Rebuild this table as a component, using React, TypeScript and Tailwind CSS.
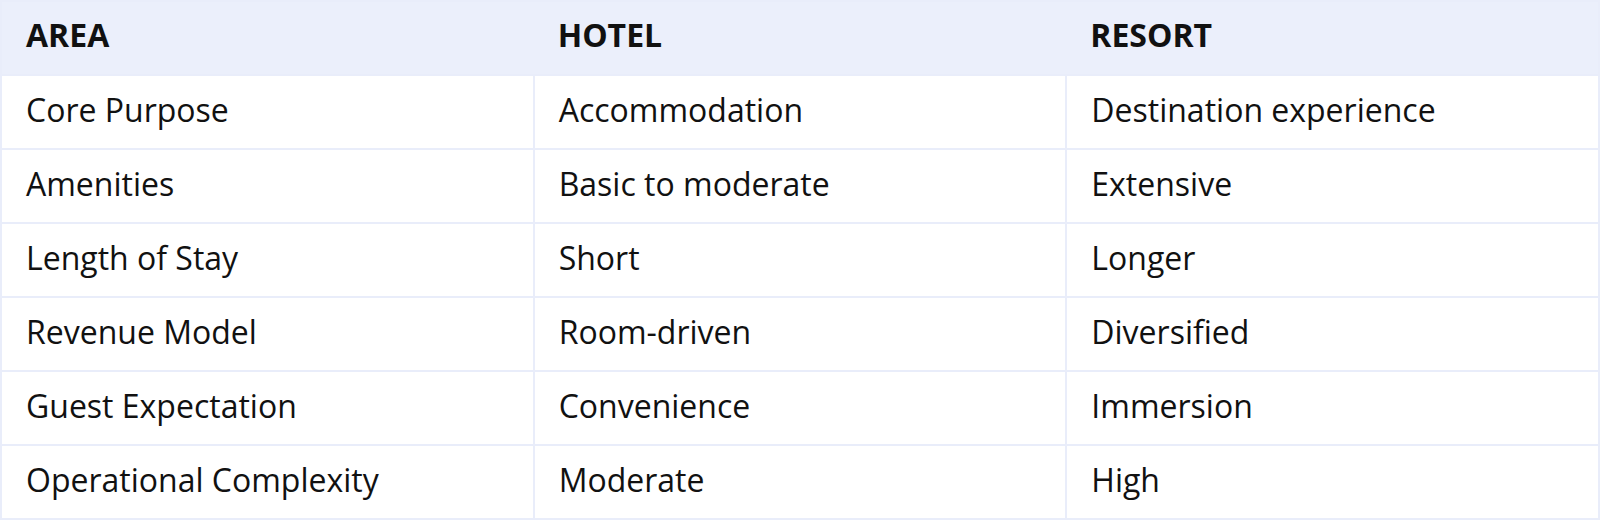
import React from "react";

const rows: [string, string, string][] = [
  ["Core Purpose", "Accommodation", "Destination experience"],
  ["Amenities", "Basic to moderate", "Extensive"],
  ["Length of Stay", "Short", "Longer"],
  ["Revenue Model", "Room-driven", "Diversified"],
  ["Guest Expectation", "Convenience", "Immersion"],
  ["Operational Complexity", "Moderate", "High"]
];

export default function App() {
  return (
    <div className="w-[1600px] bg-white font-['Open_Sans',sans-serif] text-[32px] text-[#111111]">
      <table className="w-full table-fixed border-collapse border-2 border-[#e9edfa]">
        <thead>
          <tr className="bg-[#ebeffb]">
            {["AREA", "HOTEL", "RESORT"].map((h) => (
              <th
                key={h}
                className="h-[74px] px-6 pb-[6px] text-left align-middle font-bold leading-none"
              >
                {h}
              </th>
            ))}
          </tr>
        </thead>
        <tbody>
          {rows.map((row) => (
            <tr key={row[0]}>
              {row.map((cell, i) => (
                <td
                  key={i}
                  className="h-[74px] border-2 border-[#e9edfa] px-6 pb-[5px] align-middle leading-none"
                >
                  {cell}
                </td>
              ))}
            </tr>
          ))}
        </tbody>
      </table>
    </div>
  );
}
